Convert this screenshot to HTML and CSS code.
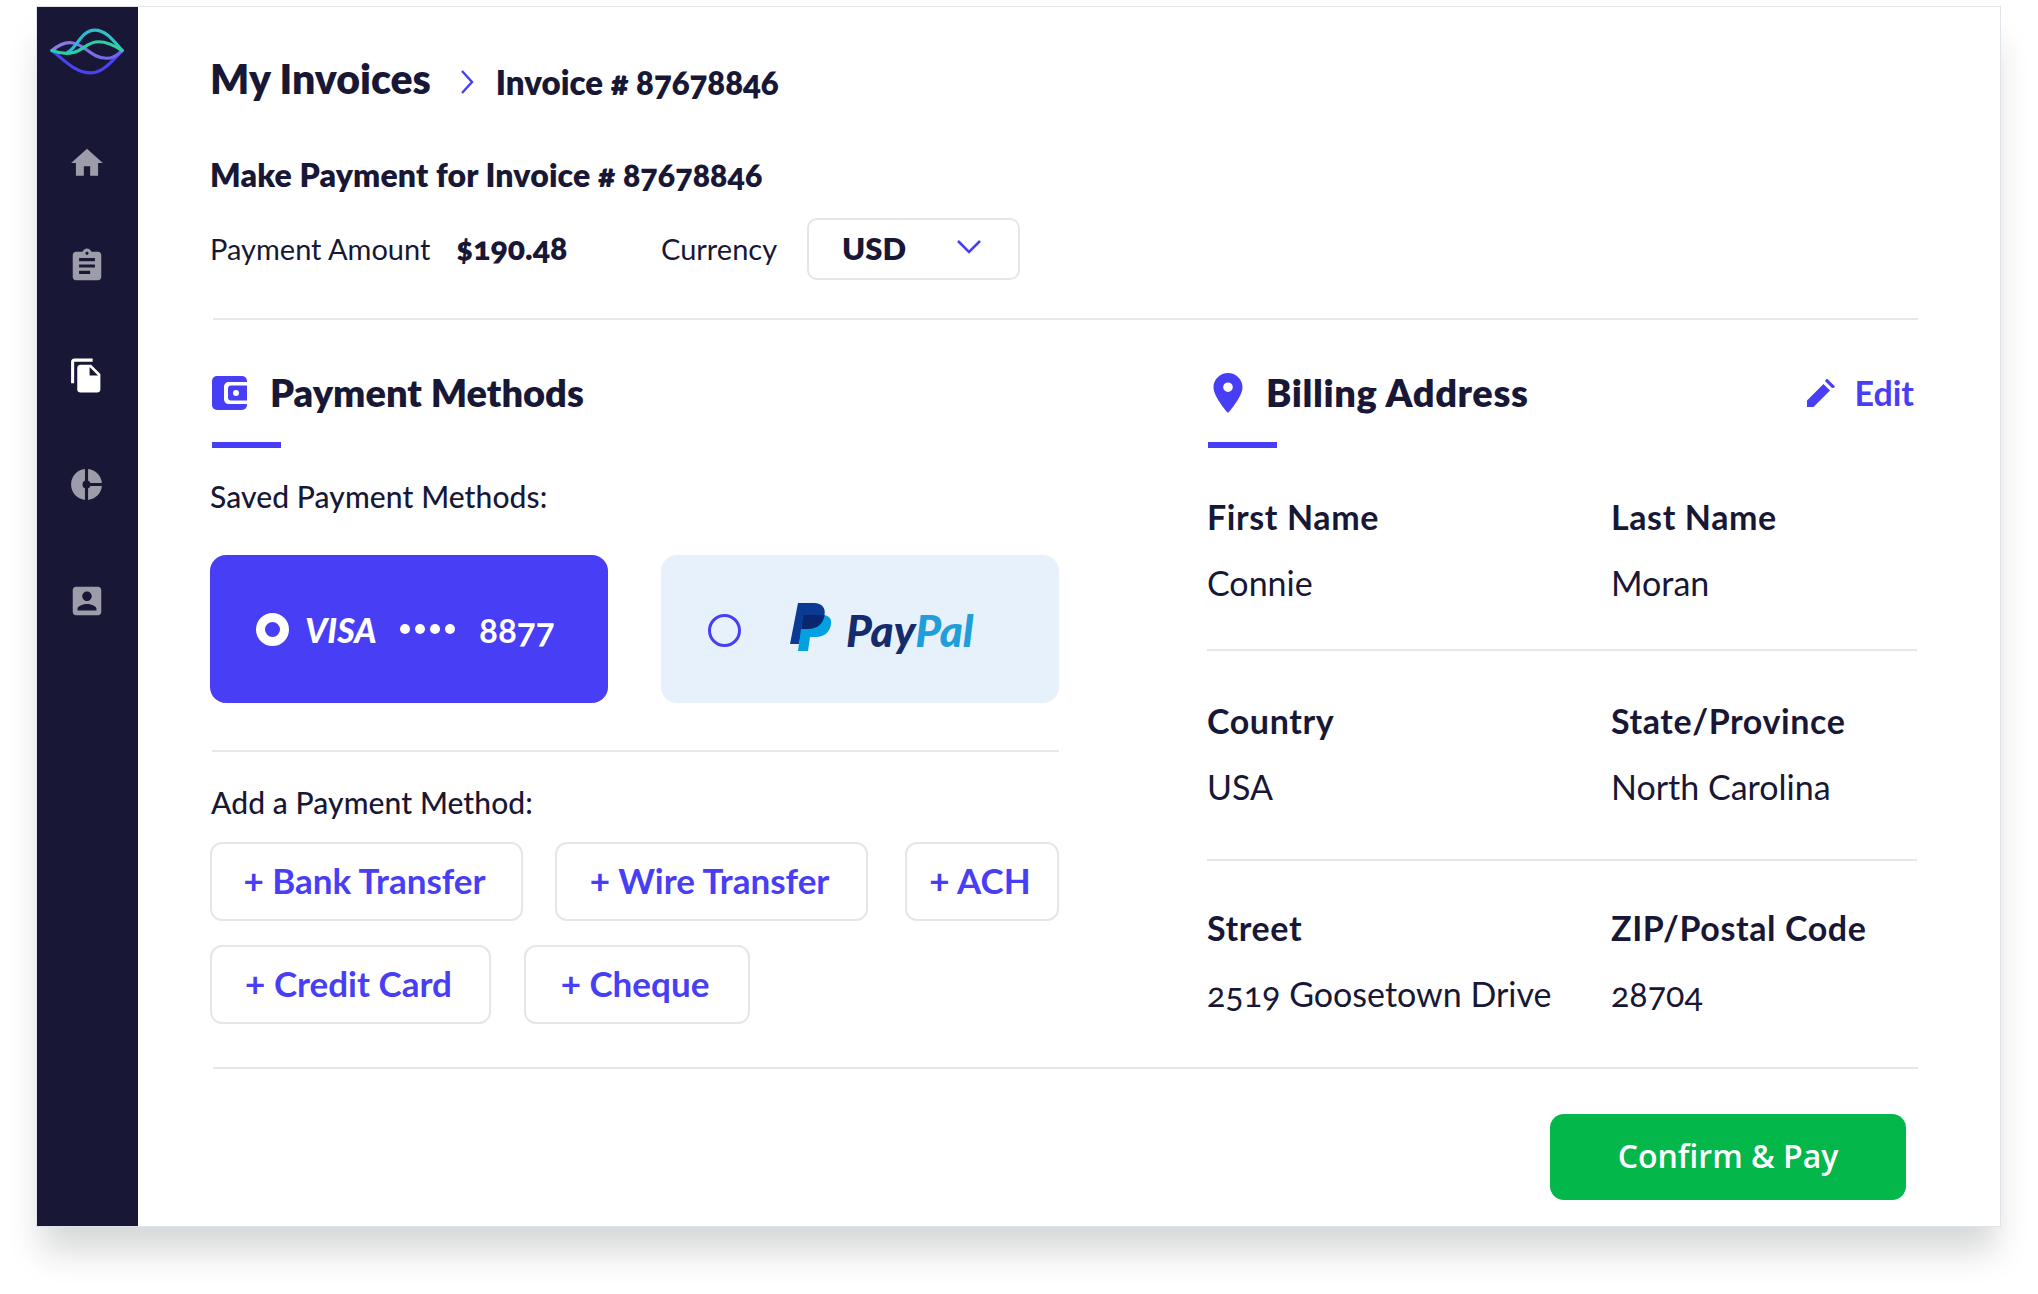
FILE: index.html
```html
<!DOCTYPE html>
<html lang="en">
<head>
    <meta charset="UTF-8">
    <title>Make Payment</title>
    <link rel="stylesheet" href="styles.css">
</head>
<body>

<div class="window">
    <aside class="sidebar">
        <svg class="logo" viewBox="0 0 76 48" fill="none" stroke-width="3.2" stroke-linecap="round">
            <defs>
                <linearGradient id="waveA" x1="0" x2="1"><stop offset="0" stop-color="#8f7be8"/><stop offset="1" stop-color="#6a66ea"/></linearGradient>
                <linearGradient id="waveB" x1="0" x2="1"><stop offset="0" stop-color="#2ab5d8"/><stop offset="1" stop-color="#36c4c0"/></linearGradient>
                <linearGradient id="waveC" x1="0" x2="1"><stop offset="0" stop-color="#24d0a8"/><stop offset="1" stop-color="#2fcfa0"/></linearGradient>
            </defs>
            <path d="M2 23C16 34 26 46 42 46C54 46 64 34 74 23" stroke="#4a43f2"/>
            <path d="M2 23C8 18 14 14 22 15C36 16 42 31 58 31C64 31 70 27 74 23" stroke="url(#waveA)"/>
            <path d="M18 25C28 20 32 2 46 2C58 2 66 14 74 23" stroke="url(#waveB)"/>
            <path d="M2 23C10 26 16 27 24 25C34 23 38 14 50 14C60 14 68 19 74 23" stroke="url(#waveC)"/>
        </svg>
        <svg class="nav-icon nav-home" viewBox="0 0 24 24"><path d="M10 20v-6h4v6h5v-8h3L12 3 2 12h3v8z"/></svg>
        <svg class="nav-icon nav-clip" viewBox="0 0 24 24"><path d="M19 3h-4.18C14.4 1.84 13.3 1 12 1c-1.3 0-2.4.84-2.82 2H5c-1.1 0-2 .9-2 2v14c0 1.1.9 2 2 2h14c1.1 0 2-.9 2-2V5c0-1.1-.9-2-2-2zm-7 0c.55 0 1 .45 1 1s-.45 1-1 1-1-.45-1-1 .45-1 1-1zm2 14H7v-2h7v2zm3-4H7v-2h10v2zm0-4H7V7h10v2z"/></svg>
        <svg class="nav-icon nav-docs" viewBox="0 0 24 24"><path d="M16 1H4c-1.1 0-2 .9-2 2v14h2V3h12V1zm-1 4l6 6v10c0 1.1-.9 2-2 2H7.99C6.89 23 6 22.1 6 21l.01-14c0-1.1.89-2 1.99-2h7zm-1 7h5.5L14 6.5V12z"/></svg>
        <svg class="nav-icon nav-pie" viewBox="0 0 24 24"><path d="M11 2v20c-5.07-.5-9-4.79-9-10s3.93-9.5 9-10zm2.03 0v8.99H22c-.47-4.74-4.24-8.52-8.97-8.99zm0 11.01V22c4.74-.47 8.5-4.25 8.97-8.99h-8.97z"/><circle cx="12" cy="12" r="2.6" fill="#181836"/></svg>
        <svg class="nav-icon nav-user" viewBox="0 0 24 24"><path d="M3 5v14c0 1.1.89 2 2 2h14c1.1 0 2-.9 2-2V5c0-1.1-.9-2-2-2H5c-1.11 0-2 .9-2 2zm12 4c0 1.66-1.34 3-3 3s-3-1.34-3-3 1.34-3 3-3 3 1.34 3 3zm-9 8c0-2 4-3.1 6-3.1s6 1.1 6 3.1v1H6v-1z"/></svg>
    </aside>

    <main class="main">
        <div class="crumbs">
            <h1>My Invoices</h1>
            <svg class="crumb-arrow" viewBox="0 0 14 24" fill="none"><path d="M2 1l10 11L2 23" stroke="#473ef5" stroke-width="2.4"/></svg>
            <span class="crumb-current">Invoice # 87678846</span>
        </div>

        <h3 class="make-title">Make Payment for Invoice # 87678846</h3>

        <div class="amount-row">
            <span class="amount-label">Payment Amount</span>
            <strong class="amount">$190.48</strong>
            <span class="currency-label">Currency</span>
            <div class="select">
                <span>USD</span>
                <svg class="select-arrow" viewBox="0 0 24 14" fill="none"><path d="M1 1l11 11L23 1" stroke="#473ef5" stroke-width="2.6"/></svg>
            </div>
        </div>

        <div class="rule"></div>

        <div class="columns">
            <section class="col-left">
                <div class="sec-head">
                    <svg class="wallet" viewBox="0 0 35 34">
                        <rect width="35" height="34" rx="5" fill="#473ef5"/>
                        <path d="M35 6H17c-3 0-5 2-5 5v12c0 3 2 5 5 5h18z" fill="#fff"/>
                        <path d="M35 9.500H19c-2 0-3 1-3 3v9c0 2 1 3 3 3h16z" fill="#473ef5"/>
                        <circle cx="24" cy="17" r="3" fill="#fff"/>
                    </svg>
                    <h2>Payment Methods</h2>
                </div>
                <div class="sec-line"></div>

                <p class="label saved-label">Saved Payment Methods:</p>

                <div class="cards">
                    <div class="pay-card pay-visa">
                        <span class="radio-on"></span>
                        <span class="visa-mark">VISA</span>
                        <span class="dots"><i></i><i></i><i></i><i></i></span>
                        <span class="last-four">8877</span>
                    </div>
                    <div class="pay-card pay-paypal">
                        <span class="radio-off"></span>
                        <svg class="pp-mark" viewBox="0 0 42 48">
                            <path d="M8 0H24C32 0 36 5 34.500 12C33 21 27 26 18 26H12L9 41H0Z" fill="#0a3a94"/>
                            <path d="M13 12H32C38 12 42 15 41 21C40 30 33 34 26 34H20L18 48H8Z" fill="#02a0e0"/>
                            <path d="M13 12H34.800C33 21 27 26 18 26H11.200Z" fill="#08276f"/>
                        </svg>
                        <span class="pp-text"><b>Pay</b><em>Pal</em></span>
                    </div>
                </div>

                <div class="rule rule-short"></div>

                <p class="label add-label">Add a Payment Method:</p>

                <div class="add-row">
                    <button class="add-btn btn-bank">+ Bank Transfer</button>
                    <button class="add-btn btn-wire">+ Wire Transfer</button>
                    <button class="add-btn btn-ach">+ ACH</button>
                </div>
                <div class="add-row">
                    <button class="add-btn btn-credit">+ Credit Card</button>
                    <button class="add-btn btn-cheque">+ Cheque</button>
                </div>
            </section>

            <section class="col-right">
                <div class="sec-head">
                    <svg class="pin" viewBox="0 0 29 40"><path fill-rule="evenodd" d="M14.500 0C6.500 0 0 6.300 0 14.200 0 24 14.500 40 14.500 40S29 24 29 14.200C29 6.300 22.500 0 14.500 0zm0 19a4.800 4.800 0 1 1 0-9.600 4.800 4.800 0 0 1 0 9.600z" fill="#473ef5"/></svg>
                    <h2 class="billing-title">Billing Address</h2>
                    <a class="edit">
                        <svg class="pencil" viewBox="0 0 28 28"><path d="M0 21.500V28h6.500L23 11.500 16.500 5zM27.500 7l-6.500-6.500c-.6-.6-1.500-.6-2 0L18 2l7 7 2.500-.5c.6-.5.6-1 0-1.500z" fill="#473ef5"/></svg>
                        <span>Edit</span>
                    </a>
                </div>
                <div class="sec-line"></div>

                <div class="addr-row addr-first">
                    <div><h4>First Name</h4><p>Connie</p></div>
                    <div><h4>Last Name</h4><p>Moran</p></div>
                </div>
                <div class="addr-row addr-mid">
                    <div><h4>Country</h4><p>USA</p></div>
                    <div><h4>State/Province</h4><p>North Carolina</p></div>
                </div>
                <div class="addr-row addr-last">
                    <div><h4>Street</h4><p>2519 Goosetown Drive</p></div>
                    <div><h4>ZIP/Postal Code</h4><p>28704</p></div>
                </div>
            </section>
        </div>

        <div class="rule"></div>

        <div class="footer">
            <button class="confirm">Confirm &amp; Pay</button>
        </div>
    </main>
</div>

</body>
</html>
```

FILE: styles.css
```css
* {
    box-sizing: border-box;
}

body {
    margin: 0;
    padding: 6px 0 0 36px;
    background-color: #fff;
    color: #181836;
    font-family: 'Lato', 'Open Sans', sans-serif;
    font-variant-numeric: oldstyle-nums;
    min-height: 1294px;
}

h1, h2, h3, h4, p {
    margin: 0;
}

.window {
    display: flex;
    width: 1965px;
    height: 1221px;
    background: #fff;
    border: 1px solid #dfe3ea;
    box-shadow: 0 30px 32px -6px rgba(30, 35, 40, 0.18);
}

.sidebar {
    width: 101px;
    flex-shrink: 0;
    background-color: #181836;
    display: flex;
    flex-direction: column;
    align-items: center;
}

.logo {
    width: 74px;
    height: 47px;
    margin: 21px 1px 0 0;
}

.nav-icon {
    width: 38px;
    height: 38px;
    fill: #9d9da9;
    margin-right: 2px;
}

.nav-home { margin-top: 69px; }
.nav-clip { margin-top: 65px; }
.nav-docs { margin-top: 72px; fill: #fff; width: 37px; height: 37px; }
.nav-pie { margin-top: 72px; width: 37px; height: 37px; }
.nav-user { margin-top: 79px; }

.main {
    flex: 1;
    padding: 50px 82px 0 72px;
}

.crumbs {
    display: flex;
    align-items: center;
    height: 46px;
}

.crumbs h1 {
    font-size: 41px;
    line-height: 46px;
    font-weight: 800;
    margin-top: -2px;
}

.crumb-arrow {
    width: 14px;
    height: 24px;
    margin: 4px 22px 0 29px;
}

.crumb-current {
    font-size: 33px;
    font-weight: 800;
    margin-top: 3px;
}

.make-title {
    margin-top: 54px;
    font-size: 32px;
    line-height: 36px;
    font-weight: 800;
    letter-spacing: 0.15px;
}

.amount-row {
    display: flex;
    align-items: center;
    margin-top: 25px;
    font-size: 29px;
}

.amount-label {
    width: 246px;
    margin-top: -2px;
}

.amount {
    width: 205px;
    font-size: 32px;
    font-weight: 800;
    margin-top: -3px;
}

.currency-label {
    width: 146px;
    margin-top: -2px;
}

.select {
    width: 213px;
    height: 62px;
    border: 2px solid #e4e6ea;
    border-radius: 10px;
    display: flex;
    align-items: center;
    justify-content: space-between;
    padding: 0 37px 2px 33px;
    font-size: 31px;
    font-weight: 800;
}

.select-arrow {
    width: 24px;
    height: 14px;
    margin-bottom: 2px;
}

.rule {
    height: 2px;
    margin: 38px 0 0 3px;
    background-color: #e6e7ea;
}

.columns {
    display: flex;
    gap: 148px;
    margin-top: 51px;
    height: 658px;
}

.col-left {
    width: 849px;
}

.col-right {
    width: 710px;
}

.sec-head {
    display: flex;
    align-items: center;
    height: 44px;
    padding-left: 2px;
}

.sec-head h2 {
    font-size: 38px;
    font-weight: 800;
    margin-top: -3px;
}

.billing-title {
    letter-spacing: 0.6px;
}

.wallet {
    width: 35px;
    height: 34px;
    margin-right: 23px;
}

.pin {
    width: 30px;
    height: 40px;
    margin: 0 23px 0 4px;
}

.edit {
    margin: 0 3px 0 auto;
    display: flex;
    align-items: center;
    gap: 19px;
    color: #473ef5;
    font-size: 34px;
    font-weight: 700;
}

.edit span {
    margin-top: -2px;
}

.pencil {
    width: 28px;
    height: 28px;
}

.sec-line {
    width: 69px;
    height: 6px;
    margin: 27px 0 0 2px;
    background-color: #473ef5;
}

.col-right .sec-line {
    margin-left: 1px;
}

.label {
    font-size: 30px;
    line-height: 36px;
    font-weight: 500;
    letter-spacing: 0.1px;
}

.saved-label {
    margin-top: 30px;
}

.cards {
    display: flex;
    gap: 53px;
    margin-top: 41px;
}

.pay-card {
    width: 398px;
    height: 148px;
    border-radius: 16px;
    display: flex;
    align-items: center;
}

.pay-visa {
    background-color: #473ef5;
    color: #fff;
    padding-left: 46px;
}

.pay-paypal {
    background-color: #e7f1fb;
    padding-left: 47px;
}

.radio-on {
    width: 33px;
    height: 33px;
    border: 9px solid #fff;
    border-radius: 50%;
    margin-right: 16px;
}

.radio-off {
    width: 33px;
    height: 33px;
    border: 3px solid #473ef5;
    border-radius: 50%;
    margin: 2px 49px 0 0;
}

.visa-mark {
    width: 95px;
    font-size: 34px;
    font-weight: 900;
    font-style: italic;
}

.dots {
    display: flex;
    gap: 5px;
    width: 79px;
}

.dots i {
    width: 10px;
    height: 10px;
    border-radius: 50%;
    background-color: #fff;
}

.last-four {
    font-size: 35px;
    font-weight: 700;
}

.pp-mark {
    width: 42px;
    height: 48px;
    margin: -4px 14px 0 0;
}

.pp-text {
    font-size: 44px;
    font-weight: 900;
    font-style: italic;
    margin-top: 2px;
}

.pp-text b {
    color: #142c6e;
    font-weight: 900;
}

.pp-text em {
    color: #1f9ed9;
}

.rule-short {
    margin: 47px 0 0 2px;
}

.add-label {
    margin: 32px 0 0 1px;
}

.add-row {
    display: flex;
    margin-top: 22px;
}

.add-row + .add-row {
    margin-top: 24px;
}

.add-btn {
    height: 79px;
    background: #fff;
    border: 2px solid #e4e6ea;
    border-radius: 12px;
    color: #473ef5;
    font-family: inherit;
    font-size: 35px;
    font-weight: 700;
    padding: 0 4px 3px 0;
}

.btn-bank { width: 313px; margin-right: 32px; }
.btn-wire { width: 313px; margin-right: 37px; }
.btn-ach { width: 154px; }
.btn-credit { width: 281px; margin-right: 33px; }
.btn-cheque { width: 226px; }

.addr-row {
    display: grid;
    grid-template-columns: 404px 1fr;
    border-bottom: 2px solid #e6e7ea;
    padding-bottom: 46px;
}

.addr-first {
    margin-top: 49px;
}

.addr-mid {
    padding-top: 50px;
    padding-bottom: 52px;
}

.addr-last {
    padding-top: 47px;
    border-bottom: none;
}

.addr-row h4 {
    font-size: 34px;
    line-height: 40px;
    font-weight: 700;
    letter-spacing: 0.6px;
}

.addr-row p {
    margin-top: 26px;
    font-size: 34px;
    line-height: 40px;
    font-weight: 400;
}

.footer {
    display: flex;
    justify-content: flex-end;
    padding: 45px 12px 0 0;
}

.confirm {
    width: 356px;
    height: 86px;
    background-color: #03b74b;
    border: none;
    border-radius: 14px;
    color: #fff;
    font-family: 'Open Sans', sans-serif;
    font-size: 32px;
    font-weight: 600;
    padding: 0 0 4px;
}
```
